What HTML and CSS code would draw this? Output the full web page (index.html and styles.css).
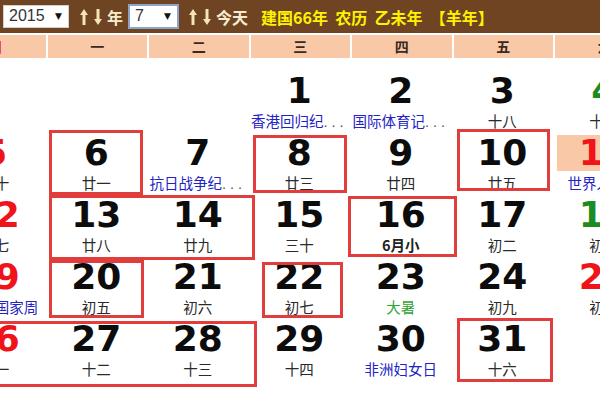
FILE: index.html
```html
<!DOCTYPE html>
<html lang="zh-CN">
<head>
<meta charset="utf-8">
<title>万年历 2015年7月</title>
<link rel="stylesheet" href="styles.css">
</head>
<body>
<div class="page">
  <div class="topbar">
    <div class="sel sel-year"><span class="sel-val">2015</span><span class="caret">▼</span></div>
    <svg class="arrows" width="24" height="18" viewBox="0 0 24 18"><path d="M4 1 L8 7 L5.5 7 L5.5 17 L2.5 17 L2.5 7 L0 7 Z"/><path d="M18 17 L22 11 L19.5 11 L19.5 1 L16.5 1 L16.5 11 L14 11 Z"/></svg>
    <span class="lbl">年</span>
    <div class="sel sel-month"><span class="sel-val">7</span><span class="caret">▼</span></div>
    <svg class="arrows arrows2" width="24" height="18" viewBox="0 0 24 18"><path d="M4 1 L8 7 L5.5 7 L5.5 17 L2.5 17 L2.5 7 L0 7 Z"/><path d="M18 17 L22 11 L19.5 11 L19.5 1 L16.5 1 L16.5 11 L14 11 Z"/></svg>
    <span class="lbl">今天</span>
    <span class="info">建国66年&nbsp; 农历&nbsp; 乙未年&nbsp; 【羊年】</span>
  </div>

  <div class="cal">
    <div class="week">
      <div class="wd wd-sun">日</div>
      <div class="wd">一</div>
      <div class="wd">二</div>
      <div class="wd">三</div>
      <div class="wd">四</div>
      <div class="wd">五</div>
      <div class="wd">六</div>
    </div>
    <div class="days">
      <div class="cell empty"></div>
      <div class="cell empty"></div>
      <div class="cell empty"></div>
      <div class="cell"><div class="num">1</div><div class="lab fest">香港回归纪<span class="dots">...</span></div></div>
      <div class="cell"><div class="num">2</div><div class="lab fest">国际体育记<span class="dots">...</span></div></div>
      <div class="cell"><div class="num">3</div><div class="lab">十八</div></div>
      <div class="cell"><div class="num green">4</div><div class="lab">十九</div></div>

      <div class="cell"><div class="num red">5</div><div class="lab">二十</div></div>
      <div class="cell"><div class="num">6</div><div class="lab">廿一</div></div>
      <div class="cell"><div class="num">7</div><div class="lab fest">抗日战争纪<span class="dots">...</span></div></div>
      <div class="cell"><div class="num">8</div><div class="lab">廿三</div></div>
      <div class="cell"><div class="num">9</div><div class="lab">廿四</div></div>
      <div class="cell"><div class="num">10</div><div class="lab">廿五</div></div>
      <div class="cell"><div class="num red today">11</div><div class="lab fest">世界人口日</div></div>

      <div class="cell"><div class="num red">12</div><div class="lab">廿七</div></div>
      <div class="cell"><div class="num">13</div><div class="lab">廿八</div></div>
      <div class="cell"><div class="num">14</div><div class="lab">廿九</div></div>
      <div class="cell"><div class="num">15</div><div class="lab">三十</div></div>
      <div class="cell"><div class="num">16</div><div class="lab month">6月小</div></div>
      <div class="cell"><div class="num">17</div><div class="lab">初二</div></div>
      <div class="cell"><div class="num green">18</div><div class="lab">初三</div></div>

      <div class="cell"><div class="num red">19</div><div class="lab fest">阿拉伯国家周</div></div>
      <div class="cell"><div class="num">20</div><div class="lab">初五</div></div>
      <div class="cell"><div class="num">21</div><div class="lab">初六</div></div>
      <div class="cell"><div class="num">22</div><div class="lab">初七</div></div>
      <div class="cell"><div class="num">23</div><div class="lab term">大暑</div></div>
      <div class="cell"><div class="num">24</div><div class="lab">初九</div></div>
      <div class="cell"><div class="num red">25</div><div class="lab">初十</div></div>

      <div class="cell"><div class="num red">26</div><div class="lab">十一</div></div>
      <div class="cell"><div class="num">27</div><div class="lab">十二</div></div>
      <div class="cell"><div class="num">28</div><div class="lab">十三</div></div>
      <div class="cell"><div class="num">29</div><div class="lab">十四</div></div>
      <div class="cell"><div class="num">30</div><div class="lab fest">非洲妇女日</div></div>
      <div class="cell"><div class="num">31</div><div class="lab">十六</div></div>
      <div class="cell empty"></div>
    </div>
  </div>

  <div class="mark mark-6"></div>
  <div class="mark mark-8"></div>
  <div class="mark mark-10"></div>
  <div class="mark mark-13"></div>
  <div class="mark mark-16"></div>
  <div class="mark mark-20"></div>
  <div class="mark mark-22"></div>
  <div class="mark mark-26"></div>
  <div class="mark mark-31"></div>
</div>
</body>
</html>
```

FILE: styles.css
```css
html, body {
  margin: 0;
  padding: 0;
  background: #ffffff;
  overflow: hidden;
}

.page {
  position: relative;
  width: 600px;
  height: 400px;
  overflow: hidden;
  font-family: "Noto Sans CJK SC", "Liberation Sans", sans-serif;
}

/* ---------- top bar ---------- */
.topbar {
  height: 33px;
  background: #6e4423;
  display: flex;
  align-items: center;
  padding-left: 3px;
  box-sizing: border-box;
}

.sel {
  box-sizing: border-box;
  background: #ffffff;
  display: flex;
  align-items: center;
  justify-content: space-between;
  font-family: "Liberation Sans", Arial, sans-serif;
  font-size: 16px;
  color: #333333;
}

.sel-year {
  width: 66px;
  height: 23px;
  padding: 0 6px 0 5px;
  border: 1px solid #d9d0c4;
  margin-top: -1px;
}

.sel-month {
  width: 51px;
  height: 25px;
  padding: 0 6px 0 5px;
  border: 2px solid #8ea3c9;
  margin-left: 5px;
  margin-top: -1px;
}

.caret {
  font-size: 9px;
  color: #111111;
  font-family: "DejaVu Sans", sans-serif;
}

.arrows {
  fill: #f4e4b6;
  margin-left: 11px;
  flex: none;
}

.arrows2 {
  margin-left: 10px;
}

.lbl {
  color: #f7ecd0;
  font-size: 16px;
  font-weight: 700;
  margin-left: 3px;
  line-height: 20px;
}

.info {
  color: #fff200;
  font-size: 16px;
  font-weight: 700;
  margin-left: 13px;
  line-height: 20px;
  white-space: nowrap;
}

/* ---------- calendar ---------- */
.cal {
  margin-left: -56px;
  width: 710.5px;
}

.week {
  display: grid;
  grid-template-columns: repeat(7, 101.5px);
  margin-top: 2px;
  height: 23px;
}

.wd {
  background: #f9c9a7;
  border-left: 2px solid #ffffff;
  text-align: center;
  font-size: 14px;
  font-weight: 700;
  line-height: 23px;
  color: #3b2a1c;
}

.wd-sun {
  color: #e8141b;
}

.days {
  display: grid;
  grid-template-columns: repeat(7, 101.5px);
  grid-auto-rows: 62px;
  margin-top: 11px;
}

.cell {
  display: flex;
  flex-direction: column;
  align-items: center;
  padding-top: 4px;
  box-sizing: border-box;
}

.num {
  align-self: stretch;
  text-align: center;
  font-family: "DejaVu Sans", sans-serif;
  font-weight: 700;
  font-size: 36px;
  line-height: 36px;
  height: 36px;
  color: #0c0c0c;
}

.num.red { color: #f0141a; }
.num.green { color: #1b8c22; }

.num.today {
  background: #f9c8a6;
  margin: 0 4px;
}

.lab {
  margin-top: 2px;
  font-size: 14.5px;
  line-height: 20px;
  color: #2a2a2a;
  white-space: nowrap;
}

.lab.fest { color: #2323c4; }
.lab.term { color: #2fa432; }
.lab.month { font-weight: 700; color: #222222; }

.dots {
  font-family: "Liberation Sans", sans-serif;
  letter-spacing: 4px;
  color: #555555;
}

/* ---------- red annotation boxes ---------- */
.mark {
  position: absolute;
  box-sizing: border-box;
  border: 3px solid #e23d3d;
}

.mark-6  { left: 49px;  top: 130px; width: 94px;  height: 65px; }
.mark-8  { left: 253px; top: 135px; width: 94px;  height: 58px; }
.mark-10 { left: 457px; top: 129px; width: 93px;  height: 62px; }
.mark-13 { left: 49px;  top: 195px; width: 206px; height: 65px; }
.mark-16 { left: 348px; top: 196px; width: 109px; height: 61px; }
.mark-20 { left: 49px;  top: 260px; width: 95px;  height: 58px; }
.mark-22 { left: 262px; top: 262px; width: 81px;  height: 56px; }
.mark-26 { left: -10px; top: 321px; width: 267px; height: 66px; }
.mark-31 { left: 457px; top: 318px; width: 96px;  height: 64px; }
```
